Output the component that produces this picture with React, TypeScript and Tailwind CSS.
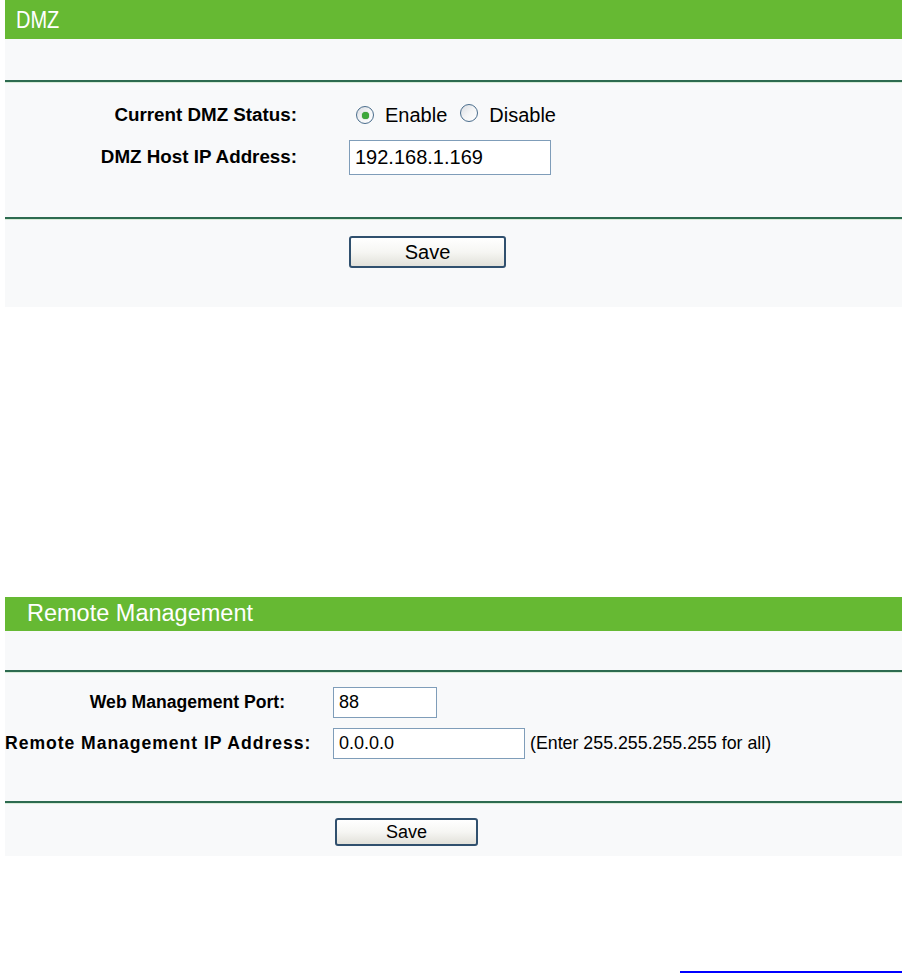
import React from "react";

const font = { fontFamily: '"Liberation Sans", Arial, sans-serif' };

function Radio({ checked }: { checked?: boolean }) {
  return (
    <span className="relative inline-flex h-[18px] w-[18px] items-center justify-center rounded-full border border-[#4a6d8c] bg-gradient-to-br from-[#d9dde2] via-[#f4f5f6] to-white">
      {checked && <span className="h-[7px] w-[7px] rounded-full bg-[#3da83a] shadow-[0_0_1px_#1f7a20]" />}
    </span>
  );
}

function Line() {
  return <div className="h-[3px] border-t-2 border-[#2d6b50] bg-[#d8ecd8]" />;
}

function SaveButton({ w, h, size }: { w: string; h: string; size: string }) {
  return (
    <button
      className={`${w} ${h} ${size} rounded-[3px] border-2 border-[#30506e] bg-gradient-to-b from-white via-[#f6f6f3] to-[#e2e1da] leading-none text-black`}
      style={font}
    >
      Save
    </button>
  );
}

export default function App() {
  return (
    <div className="h-[974px] w-[902px] overflow-hidden bg-white" style={font}>
      {/* DMZ */}
      <div className="ml-[5px]">
        <div className="flex h-[39px] items-center bg-[#66b933] pl-[11px] text-white">
          <span className="inline-block origin-left scale-y-[1.2] text-[20px]">DMZ</span>
        </div>
        <div className="h-[268px] bg-[#f8f9fa]">
          <div className="h-[41px]" />
          <Line />
          <div className="pt-[14px]">
            <div className="flex h-[36px] items-center">
              <div className="w-[292px] text-right text-[18.8px] font-bold text-black">Current DMZ Status:</div>
              <div className="ml-[59px] flex items-center text-[20px] text-black">
                <Radio checked />
                <span className="ml-[11px]">Enable</span>
                <span className="ml-[13px]"><Radio /></span>
                <span className="ml-[11px]">Disable</span>
              </div>
            </div>
            <div className="mt-[6px] flex h-[36px] items-center">
              <div className="w-[292px] text-right text-[18.8px] font-bold text-black">DMZ Host IP Address:</div>
              <div className="ml-[52px] flex h-[35px] w-[202px] items-center border border-[#7f9db9] bg-white pl-[5px] text-[20px] text-black">
                192.168.1.169
              </div>
            </div>
          </div>
          <div className="h-[42px]" />
          <Line />
          <div className="flex pt-[16px]">
            <div className="ml-[344px]">
              <SaveButton w="w-[157px]" h="h-[32px]" size="text-[20px]" />
            </div>
          </div>
        </div>
      </div>

      <div className="h-[290px]" />

      {/* Remote Management */}
      <div className="ml-[5px]">
        <div className="flex h-[34px] items-center bg-[#66b933] pl-[22px] text-[23.5px] text-white">Remote Management</div>
        <div className="h-[225px] bg-[#f8f9fa]">
          <div className="h-[39px]" />
          <Line />
          <div className="pt-[14px]">
            <div className="flex h-[31px] items-center">
              <div className="w-[280px] text-right text-[17.6px] font-bold text-black">Web Management Port:</div>
              <div className="ml-[48px] flex h-[31px] w-[104px] items-center border border-[#7f9db9] bg-white pl-[5px] text-[18px] text-black">
                88
              </div>
            </div>
            <div className="mt-[10px] flex h-[31px] items-center">
              <div className="w-[306px] whitespace-nowrap text-right text-[17.6px] font-bold tracking-[0.95px] text-black">Remote Management IP Address:</div>
              <div className="ml-[22px] flex h-[31px] w-[192px] items-center border border-[#7f9db9] bg-white pl-[5px] text-[18px] text-black">
                0.0.0.0
              </div>
              <div className="ml-[5px] text-[17.8px] text-black">(Enter 255.255.255.255 for all)</div>
            </div>
          </div>
          <div className="h-[42px]" />
          <Line />
          <div className="flex pt-[14px]">
            <div className="ml-[330px]">
              <SaveButton w="w-[143px]" h="h-[28px]" size="text-[18px]" />
            </div>
          </div>
        </div>
      </div>

      <div className="h-[115px]" />
      <div className="ml-[680px] h-[2px] w-[222px] bg-[#0000ff]" />
    </div>
  );
}
